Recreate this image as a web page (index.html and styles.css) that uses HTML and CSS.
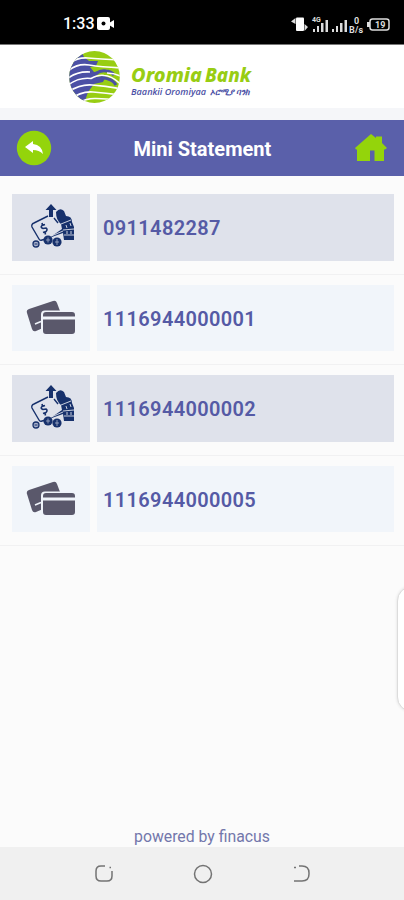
FILE: index.html
```html
<!DOCTYPE html>
<html lang="en">
<head>
<meta charset="utf-8">
<title>Mini Statement</title>
<link rel="stylesheet" href="styles.css">
</head>
<body>
<svg class="defs" width="0" height="0" aria-hidden="true">
  <symbol id="money" viewBox="0 0 46 46">
    <path d="M18 12 4 19q-3 1-2 4L9 35q1 2 3 1l4-1M24 14l4 5" fill="none" stroke="#17316c" stroke-width="1.400"/>
    <path d="M21 0l5.500 6H23v7h-4V6h-3.500z" fill="#17316c"/>
    <path d="M26 8q4-5 8-1l2 5q6 0 6 6l2 5v13H34l-1-7-14 5 13-9-1-5q-5-4-5-12z" fill="#17316c"/>
    <path d="M19 33l14-6M31 20l10-4M33 26l11-1M34 31h10M36 21l1 3M40 19l1 3M37 27v3M41 27v3" stroke="#dfe2eb" stroke-width=".9" fill="none"/>
    <path d="M15 20.500l-3 1q-2 2 1 3l3-.5q2 1 0 3.500l-3 1M12 19l.5 2M15 28.500l.5 2" stroke="#17316c" stroke-width="1.600" fill="none"/>
    <circle cx="6" cy="40" r="3" fill="#aab2cb" stroke="#17316c" stroke-width="1.300"/>
    <path d="M4.500 40h3" stroke="#17316c"/>
    <circle cx="18" cy="36" r="4.600" fill="#17316c"/><circle cx="27" cy="38" r="4.600" fill="#17316c"/>
    <path d="M16 36h4M18 33.500v5M25 38h4M27 35v6" stroke="#aab2cb" stroke-width=".8"/>
  </symbol>
  <symbol id="cards" viewBox="0 0 50 36">
    <path d="M3 9 27 1q3-1 4 2l3 8-17 12v5l-7 3q-3 1-4-2L1 13q-1-3 2-4z" fill="#5a586b"/>
    <path d="M9 24l6-2.500" stroke="#f0f4fa" stroke-width="1.500"/>
    <rect x="15" y="10.500" width="35" height="25" rx="4" fill="#f0f4fa"/>
    <path d="M20 12h26q3 0 3 3v1.500H17V15q0-3 3-3zM17 19.500h32V31q0 3-3 3H20q-3 0-3-3z" fill="#5a586b"/>
  </symbol>
</svg>
<div class="screen">
  <div class="status">
    <span class="time">1:33</span>
    <svg class="camera" width="18" height="14" viewBox="0 0 18 14"><rect width="13" height="13" rx="2" fill="#fff"/><path d="M12 6l5-3v8l-5-3z" fill="#fff"/><circle cx="6.500" cy="6.500" r="2" fill="#000"/></svg>
    <svg class="indicators" width="102" height="22" viewBox="0 0 102 22">
      <g fill="#ddd"><rect x="5" y="4.500" width="8" height="13.500" rx="1" fill="#fff"/><path d="M4.500 5v6L0 8.500zM13.500 11v7l3.500-4z"/>
      <rect x="22" y="16" width="2" height="3"/><rect x="26" y="13" width="2" height="6"/><rect x="30" y="10" width="2.500" height="9"/><rect x="34.500" y="7" width="2.500" height="12"/>
      <rect x="41" y="16" width="2" height="3"/><rect x="45" y="13" width="2" height="6"/><rect x="49" y="10" width="2.500" height="9"/><rect x="53.500" y="7" width="2.500" height="12"/>
      <path d="M79 9h-3v5h3z"/></g>
      <g fill="#ddd" class="tiny"><text x="21" y="9" font-size="7">4G</text><text x="63" y="11" font-size="9">0</text><text x="58" y="20" font-size="9" textLength="14">B/s</text><text x="84" y="15" font-size="9">19</text></g>
      <rect x="79" y="6" width="19" height="11" rx="2.500" fill="none" stroke="#ddd" stroke-width="1.500"/>
    </svg>
  </div>
  <header class="brand">
    <svg width="190" height="58" viewBox="65 48 190 58">
      <defs><clipPath id="globe"><ellipse cx="94.500" cy="77" rx="25.300" ry="26"/></clipPath></defs>
      <g clip-path="url(#globe)">
        <path d="M68 50h54v54H68z" fill="#98cd13"/>
        <path d="M67 50h14l3 7 5 4h9l-2 5-6 1 4 5 6-1-2 3-3 3 11-1-3 6-9 2-6 8-4 12H67z" fill="#4b50a5"/>
        <path d="M95 74q6-4 11-3 5 0 8 4M93 81q9-5 15-2 5 1 8 6" stroke="#4b50a5" stroke-width="3" fill="none"/>
        <path d="M66 66Q76 57 88 58t34 2M66 73Q76 63 89 65t33 3M66 80Q76 71 90 72M107 73q8 0 15 4M66 87Q77 77 91 78.500q8-4 13-3 8 0 18 10M66 94Q78 84 92 85t30 4M68 101Q80 91 93 92t28 3M74 106Q84 98 96 98.500t18 1" fill="none" stroke="#fff" stroke-width="1.600"/>
      </g>
      <g class="wordmark"><text x="131" y="81.500" font-size="20" textLength="71" lengthAdjust="spacingAndGlyphs">Oromia</text><text x="205" y="81.500" font-size="20" textLength="46" lengthAdjust="spacingAndGlyphs">Bank</text></g>
      <g class="tagline"><text x="131" y="95" font-size="8.500" textLength="75" lengthAdjust="spacingAndGlyphs">Baankii Oromiyaa</text><text x="210" y="95" font-size="9" textLength="40" lengthAdjust="spacingAndGlyphs">ኦሮሚያ ባንክ</text></g>
    </svg>
  </header>
  <nav class="titlebar">
    <svg width="36" height="36" viewBox="0 0 36 36"><circle cx="18" cy="18" r="17.200" fill="#94d40b"/><path d="M9 17l8-6v3q9 1 10 10-4-4-10-4v3z" fill="#fff"/></svg>
    <h1>Mini Statement</h1>
    <svg class="home" width="32" height="28" viewBox="0 0 32 28"><path d="M16 0l5 4V2.500h6V9l5 5-2 1.500h-1V27H19.500V16.500H15V27H2V15.500H1L0 14z" fill="#94d40b"/></svg>
  </nav>
  <main class="accounts">
    <div class="row dark"><div class="icon"><svg class="money" width="46" height="46"><use href="#money"/></svg></div><div class="number">0911482287</div></div>
    <div class="row"><div class="icon"><svg width="50" height="36"><use href="#cards"/></svg></div><div class="number">1116944000001</div></div>
    <div class="row dark"><div class="icon"><svg class="money" width="46" height="46"><use href="#money"/></svg></div><div class="number">1116944000002</div></div>
    <div class="row"><div class="icon"><svg width="50" height="36"><use href="#cards"/></svg></div><div class="number">1116944000005</div></div>
  </main>
  <footer class="powered">powered by finacus</footer>
  <div class="sysnav">
    <svg width="20" height="20" viewBox="0 0 20 20"><path d="M11 2H7Q2 2 2 7v5q0 5 5 5h6q5 0 5-5V7M15.500 3.500h1.500" /></svg>
    <svg width="20" height="20" viewBox="0 0 20 20"><circle cx="10" cy="10" r="8.500"/></svg>
    <svg width="20" height="20" viewBox="0 0 20 20"><path d="M8 2h3q7 0 7 7v1q0 7-7 7H3M3 3.500h2"/></svg>
  </div>
  <div class="edge-panel"></div>
</div>
</body>
</html>
```
FILE: styles.css
```css
* { box-sizing: border-box; }
body { margin: 0; font-family: Roboto, sans-serif; background: #fbfbfb; }
svg { display: block; flex: none; }
.defs { position: absolute; }
.screen { position: relative; width: 404px; height: 900px; overflow: hidden; display: flex; flex-direction: column; }
.status { height: 45px; flex: none; background: #000; border-bottom: 1px solid #777; display: flex; align-items: center; padding: 3px 11px 0 63px; color: #fff; }
.time { font-size: 16px; font-weight: 500; width: 34px; white-space: nowrap; }
.indicators { margin-left: auto; }
.tiny { font-family: Roboto, sans-serif; font-weight: 700; }
.brand { height: 63px; flex: none; background: #fff; padding: 3px 0 0 65px; }
.wordmark { font-family: "Noto Sans", sans-serif; font-weight: 800; font-style: italic; fill: #98cd13; }
.tagline { font-family: "Open Sans", sans-serif; font-weight: 600; font-style: italic; fill: #4b50a5; }
.titlebar { height: 68px; flex: none; border-top: 12px solid #f5f6f9; background: #5a60aa; display: flex; align-items: center; justify-content: space-between; padding: 0 17px 0 16px; }
.titlebar h1 { margin: 0; padding-top: 1px; font-size: 20px; font-weight: 700; color: #fff; width: 140px; white-space: nowrap; }
.home { margin-bottom: 1px; }
.accounts { padding-top: 8px; }
.row { height: 90.600px; display: flex; gap: 7px; padding: 10px 10px 13px 12px; border-bottom: 1px solid #f1f1f2; }
.icon { width: 78px; display: flex; align-items: center; justify-content: center; background: #f1f5fa; }
.number { flex: 1; display: flex; align-items: center; padding: 2px 0 0 6px; background: #f1f5fa; color: #555aa5; font-size: 20px; font-weight: 600; letter-spacing: .35px; }
.dark .icon, .dark .number { background: #dfe2eb; }
.money { margin-left: 3px; }
.powered { margin-top: auto; height: 20px; text-align: center; font-size: 15.800px; line-height: 20px; color: #7377ab; }
.sysnav { height: 53px; flex: none; background: #f0f0f0; display: flex; justify-content: space-between; padding: 17px 93px 0 94px; }
.sysnav svg { fill: none; stroke: #737373; stroke-width: 1.500; }
.edge-panel { position: absolute; left: 397px; top: 586px; width: 30px; height: 126px; border: 1px solid #dcdcdc; border-radius: 18px; background: #fff; box-shadow: 0 0 3px #ddd; }
```
